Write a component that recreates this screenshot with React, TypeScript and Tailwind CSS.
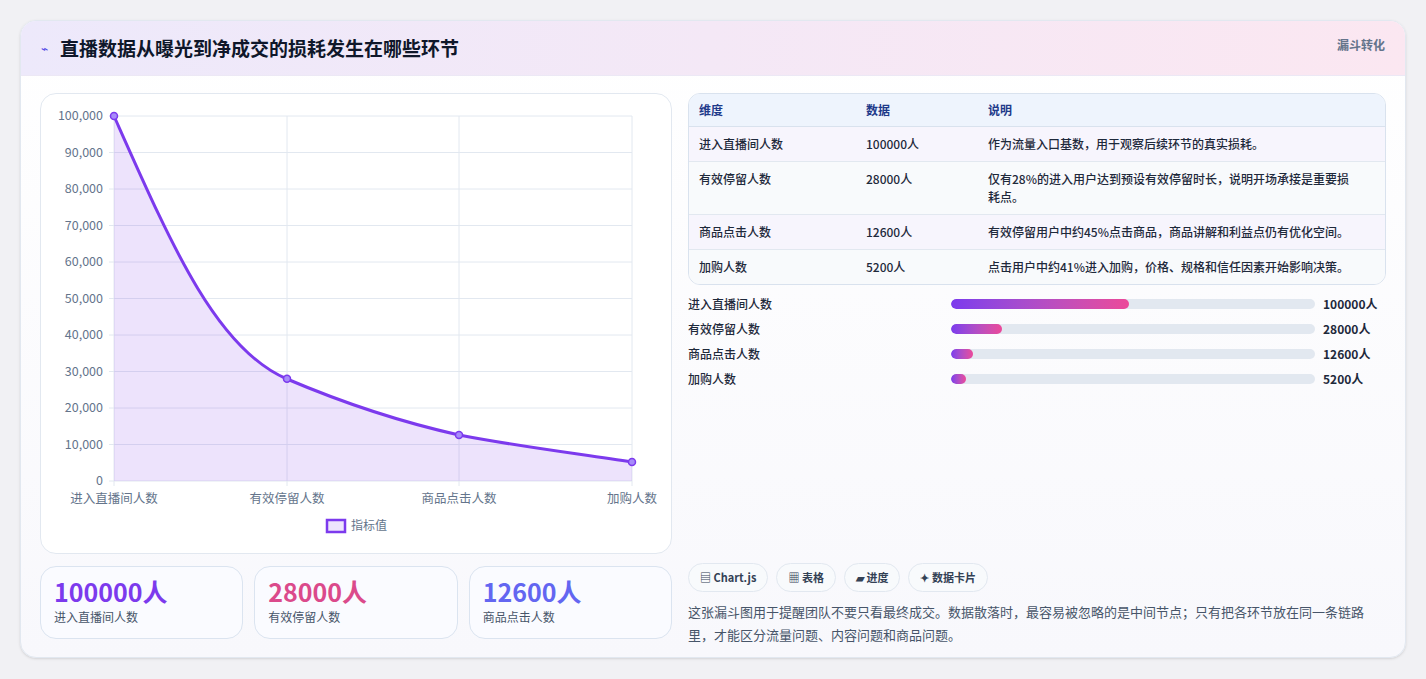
const font = { fontFamily: '"Noto Sans CJK SC", "Noto Sans", sans-serif' };

const rows = [
  ["进入直播间人数", "100000人", "作为流量入口基数，用于观察后续环节的真实损耗。"],
  ["有效停留人数", "28000人", "仅有28%的进入用户达到预设有效停留时长，说明开场承接是重要损耗点。"],
  ["商品点击人数", "12600人", "有效停留用户中约45%点击商品，商品讲解和利益点仍有优化空间。"],
  ["加购人数", "5200人", "点击用户中约41%进入加购，价格、规格和信任因素开始影响决策。"],
];

const bars = [
  ["进入直播间人数", 49, "100000人"],
  ["有效停留人数", 14, "28000人"],
  ["商品点击人数", 6, "12600人"],
  ["加购人数", 4, "5200人"],
] as const;

function Chart() {
  const ys = [0, 10000, 20000, 30000, 40000, 50000, 60000, 70000, 80000, 90000, 100000];
  const xs = [73, 246, 418, 591];
  const labels = ["进入直播间人数", "有效停留人数", "商品点击人数", "加购人数"];
  const y = (v: number) => 387 - (v / 100000) * 365;
  const line = "M73,22 C130,150 175,255 246,285 C300,308 360,328 418,341 C480,353 540,360 591,368";
  return (
    <svg width="632" height="460" viewBox="0 0 632 460" className="block">
      {ys.map((v) => (
        <g key={v}>
          <line x1="68" x2="591" y1={y(v)} y2={y(v)} stroke="#e2e8f0" />
          <text x="62" y={y(v) + 4} textAnchor="end" fontSize="12.5" fill="#64748b">
            {v.toLocaleString("en-US")}
          </text>
        </g>
      ))}
      {xs.map((x, i) => (
        <g key={x}>
          <line x1={x} x2={x} y1="22" y2="392" stroke="#e2e8f0" />
          <text x={x} y="409" textAnchor="middle" fontSize="12.5" fill="#64748b">
            {labels[i]}
          </text>
        </g>
      ))}
      <path d={line + " L591,387 L73,387 Z"} fill="#7c3aed" fillOpacity="0.14" />
      <path d={line} fill="none" stroke="#7c3aed" strokeWidth="3" />
      {[100000, 28000, 12600, 5200].map((v, i) => (
        <circle key={v} cx={xs[i]} cy={y(v)} r="3.5" fill="#a78bfa" stroke="#7c3aed" strokeWidth="1.5" />
      ))}
      <rect x="286" y="426" width="18" height="12" fill="#ede4fd" stroke="#7c3aed" strokeWidth="2.5" />
      <text x="310" y="436" fontSize="12" fill="#64748b">指标值</text>
    </svg>
  );
}

export default function App() {
  return (
    <div className="min-h-[679px] bg-[#f1f1f4] pt-5 px-5" style={font}>
      <div className="rounded-2xl border border-[#e2e8f0] bg-gradient-to-b from-white to-[#f8f8fc] overflow-hidden shadow-sm h-[638px] flex flex-col">
        <div className="h-[55px] flex items-start justify-between px-5 bg-gradient-to-r from-[#ede9fb] to-[#fbe7f1] border-b border-[#ece8f5]">
          <div className="flex items-center gap-3 h-full">
            <span className="text-[#4f46e5] text-xs">⌁</span>
            <h1 className="text-[19px] font-bold text-[#0f172a]">直播数据从曝光到净成交的损耗发生在哪些环节</h1>
          </div>
          <span className="text-xs font-semibold text-[#64748b] mt-[16px]">漏斗转化</span>
        </div>
        <div className="flex gap-4 px-[19px] pt-[17px]">
          <div className="w-[632px] flex flex-col gap-3">
            <div className="rounded-2xl border border-[#e2e8f0] bg-white h-[461px] overflow-hidden">
              <Chart />
            </div>
            <div className="grid grid-cols-3 gap-[11px]">
              {[
                ["100000人", "text-[#7c3aed]", "进入直播间人数"],
                ["28000人", "text-[#db4a8b]", "有效停留人数"],
                ["12600人", "text-[#6366f1]", "商品点击人数"],
              ].map(([v, c, l]) => (
                <div key={l} className="rounded-2xl border border-[#dbe4f0] bg-[#fafbff] h-[73px] px-[13px] pt-[8px]">
                  <div className={`text-[25px] font-bold leading-[32px] ${c}`}>{v}</div>
                  <div className="text-xs text-[#475569] mt-[2px]">{l}</div>
                </div>
              ))}
            </div>
          </div>
          <div className="flex-1 flex flex-col">
            <div className="rounded-xl border border-[#d9e2ee] overflow-hidden text-xs text-[#1e293b] font-medium">
              <div className="grid grid-cols-[167px_122px_1fr] bg-[#eef4fd] h-[33px] items-center px-[10px] font-semibold text-[#1e3a8a] border-b border-[#d9e2ee]">
                <span>维度</span><span>数据</span><span>说明</span>
              </div>
              {rows.map((r, i) => (
                <div key={r[0]} className={`grid grid-cols-[167px_122px_1fr] px-[10px] py-[8px] leading-[18px] ${i < 3 ? "border-b border-[#e2e8f0]" : ""} ${i % 2 ? "bg-[#f8fafc]" : "bg-[#f7f5fd]"}`}>
                  <span>{r[0]}</span><span>{r[1]}</span><span className="pr-5">{r[2]}</span>
                </div>
              ))}
            </div>
            <div className="flex flex-col gap-[7px] mt-[10px] font-medium">
              {bars.map(([l, w, v]) => (
                <div key={l} className="flex items-center text-xs text-[#1e293b] h-[18px]">
                  <span className="w-[263px]">{l}</span>
                  <div className="w-[364px] h-[10px] rounded-full bg-[#e2e8f0] overflow-hidden">
                    <div className="h-full rounded-full bg-gradient-to-r from-[#7c3aed] to-[#ec4899]" style={{ width: `${w}%` }} />
                  </div>
                  <span className="ml-2 font-semibold">{v}</span>
                </div>
              ))}
            </div>
            <div>
              <div className="flex gap-2 mt-[175px]">
                {["▤ Chart.js", "▦ 表格", "▰ 进度", "✦ 数据卡片"].map((t) => (
                  <span key={t} className="rounded-full border border-[#e2e8f0] bg-[#f8fafc] px-[11px] h-[29px] flex items-center text-[11px] font-semibold text-[#334155]">{t}</span>
                ))}
              </div>
              <p className="mt-[8px] text-[13px] leading-[23px] text-[#475569]">
                这张漏斗图用于提醒团队不要只看最终成交。数据散落时，最容易被忽略的是中间节点；只有把各环节放在同一条链路里，才能区分流量问题、内容问题和商品问题。
              </p>
            </div>
          </div>
        </div>
      </div>
    </div>
  );
}
